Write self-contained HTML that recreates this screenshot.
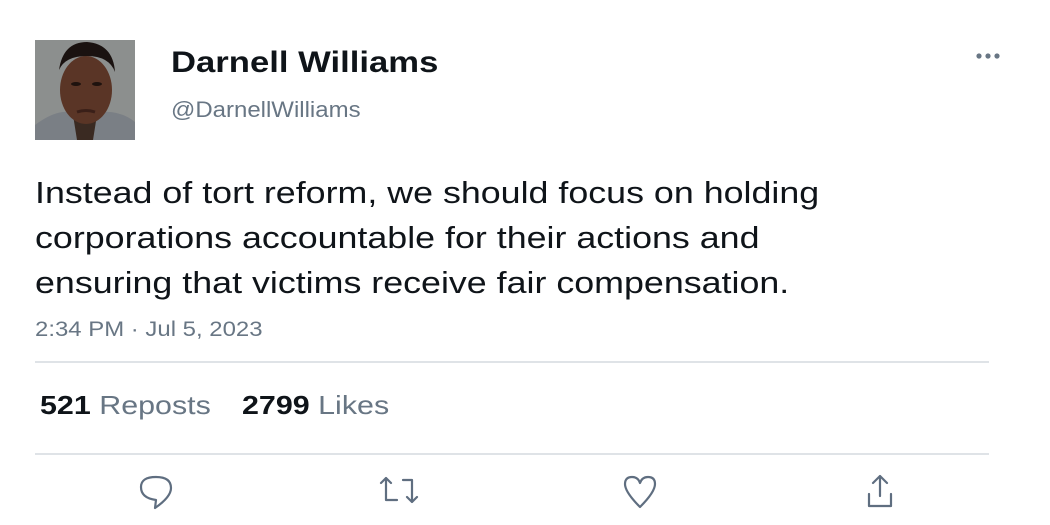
<!DOCTYPE html>
<html><head><style>
body{margin:0;width:1050px;height:525px;background:#fff;font-family:"Liberation Sans",Arial,sans-serif;position:relative;overflow:hidden;color:#0f1419}
.a{position:absolute;transform-origin:0 0;white-space:nowrap}
.line{position:absolute;left:35px;width:954px;height:2px;background:#dfe3e7}
.g{color:#687684}
</style></head><body>
<div class="a" style="left:35px;top:40px;width:100px;height:100px;overflow:hidden;background:#8a8d8c">
<svg width="100" height="100" viewBox="0 0 100 100">
<rect width="100" height="100" fill="#8c8f8e"/>
<path d="M0 85 Q20 70 35 72 L65 72 Q85 70 100 82 L100 100 L0 100Z" fill="#7a7f85"/>
<path d="M38 75 L62 75 L58 100 L42 100Z" fill="#3a2a22"/>
<ellipse cx="51" cy="50" rx="26" ry="34" fill="#5a3526"/>
<path d="M24 30 Q28 2 52 2 Q78 4 80 32 Q74 16 52 16 Q30 16 24 30Z" fill="#1a1210"/>
<ellipse cx="41" cy="44" rx="5" ry="2" fill="#1e120e"/>
<ellipse cx="62" cy="44" rx="5" ry="2" fill="#1e120e"/>
<path d="M42 72 Q51 69 60 72" stroke="#3a1f18" stroke-width="3" fill="none"/>
</svg></div>
<div class="a" style="left:171px;top:46px;font-size:30px;font-weight:bold;transform:scaleX(1.155)">Darnell Williams</div>
<div class="a g" style="left:171px;top:97px;font-size:22px;transform:scaleX(1.09)">@DarnellWilliams</div>
<svg class="a" style="left:975px;top:52px" width="28" height="8" fill="#687684"><circle cx="4" cy="4" r="2.6"/><circle cx="13" cy="4" r="2.6"/><circle cx="22" cy="4" r="2.6"/></svg>
<div class="a" style="left:35px;top:170px;font-size:31px;line-height:45px;transform:scaleX(1.155)">Instead of tort reform, we should focus on holding<br>corporations accountable for their actions and<br>ensuring that victims receive fair compensation.</div>
<div class="a g" style="left:35px;top:318px;font-size:21px;transform:scaleX(1.14)">2:34 PM · Jul 5, 2023</div>
<div class="line" style="top:361px"></div>
<div class="a" style="left:40px;top:390px;font-size:26px;transform:scaleX(1.17)"><b>521</b> <span class="g">Reposts</span></div>
<div class="a" style="left:242px;top:390px;font-size:26px;transform:scaleX(1.17)"><b>2799</b> <span class="g">Likes</span></div>
<div class="line" style="top:453px"></div>
<svg class="a" style="left:0;top:470px" width="1050" height="50" fill="none" stroke="#5f6e80" stroke-width="2.2" stroke-linecap="round" stroke-linejoin="round">
<path d="M155 38 L156 30 Q141 28 141 17 Q141 7 156 7 Q171 7 171 18 Q171 27 155 38Z"/>
<path d="M386 8 L386 30 L397 30 M381 13 L386 8 L391 13 M403 10 L412 10 L412 32 M407 27 L412 32 L417 27"/>
<path d="M640 37 Q625 22 625 14 Q625 7 632 7 Q638 7 640 13 Q642 7 648 7 Q655 7 655 14 Q655 22 640 37Z"/>
<path d="M880 6 L880 26 M873 13 L880 6 L887 13 M869 24 L869 36 L891 36 L891 24"/>
</svg>
</body></html>
